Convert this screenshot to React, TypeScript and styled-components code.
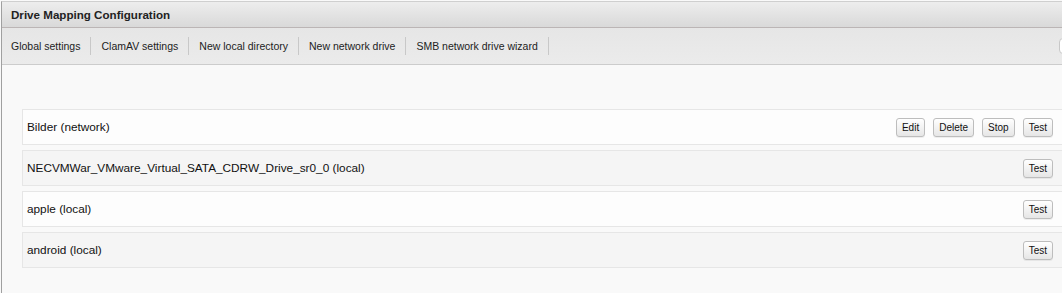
import styled, { createGlobalStyle } from "styled-components";

const GlobalStyle = createGlobalStyle`
  html, body {
    margin: 0;
    padding: 0;
    background: #f9f9f9;
    overflow: hidden;
    font-family: "Liberation Sans", Arial, sans-serif;
    color: #111;
  }
`;

type Drive = { name: string; kind: "network" | "local"; actions: string[] };

const drives: Drive[] = [
  { name: "Bilder", kind: "network", actions: ["Edit", "Delete", "Stop", "Test"] },
  { name: "NECVMWar_VMware_Virtual_SATA_CDRW_Drive_sr0_0", kind: "local", actions: ["Test"] },
  { name: "apple", kind: "local", actions: ["Test"] },
  { name: "android", kind: "local", actions: ["Test"] },
];

const menu = [
  "Global settings",
  "ClamAV settings",
  "New local directory",
  "New network drive",
  "SMB network drive wizard",
];

function App() {
  return (
    <>
      <GlobalStyle />
      <Panel>
        <TitleBar>Drive Mapping Configuration</TitleBar>
        <Toolbar>
          {menu.map((item) => (
            <MenuItem key={item}>{item}</MenuItem>
          ))}
          <Search />
        </Toolbar>
        <Content>
          {drives.map((d, idx) => (
            <DriveRow key={d.name} $odd={idx % 2 === 1}>
              <DriveName>
                {d.name} ({d.kind})
              </DriveName>
              <Actions>
                {d.actions.map((a) => (
                  <Button key={a}>{a}</Button>
                ))}
              </Actions>
            </DriveRow>
          ))}
        </Content>
      </Panel>
    </>
  );
}

export default App;

const Panel = styled.div`
  margin: 1px 0 0 1px;
  width: 1170px;
  height: 292px;
  border-left: 1px solid #a0a0a0;
  border-top: 1px solid #cfcfcf;
  background: #f9f9f9;
  box-sizing: border-box;
`;

const TitleBar = styled.div`
  height: 25px;
  line-height: 25px;
  padding-left: 9px;
  font-size: 11.6px;
  font-weight: bold;
  color: #222;
  background: linear-gradient(#ededed, #d9d9d9);
  border-bottom: 1px solid #bbb5b5;
`;

const Toolbar = styled.div`
  display: flex;
  align-items: center;
  height: 36px;
  padding-right: 10px;
  background: linear-gradient(#e6e6e6, #ebebeb);
  border-bottom: 1px solid #cccccc;
`;

const MenuItem = styled.span`
  padding: 0 10px 0 9px;
  font-size: 10.5px;
  line-height: 18px;
  color: #222;
  border-right: 1px solid #c8c8c8;
  & + & {
    padding-left: 10px;
  }
`;

const Search = styled.div`
  margin-left: auto;
  width: 100px;
  height: 14px;
  border: 1px solid #c8c8c8;
  border-radius: 4px;
  background: #fff;
`;

const Content = styled.div`
  display: flex;
  flex-direction: column;
  gap: 5px;
  padding: 44px 0 0 20px;
`;

const DriveRow = styled.div<{ $odd: boolean }>`
  display: flex;
  align-items: center;
  justify-content: space-between;
  width: 1042px;
  height: 36px;
  box-sizing: border-box;
  padding: 0 10px 0 4px;
  border: 1px solid #e6e6e6;
  background: ${(p) => (p.$odd ? "#f5f5f5" : "#fdfdfd")};
`;

const DriveName = styled.span`
  font-size: 11.8px;
  color: #111;
`;

const Actions = styled.div`
  display: flex;
  gap: 8px;
`;

const Button = styled.button`
  height: 19px;
  padding: 0 5px;
  font-family: "Liberation Sans", Arial, sans-serif;
  font-size: 10px;
  color: #111;
  border: 1px solid #bdbdbd;
  border-radius: 3px;
  background: linear-gradient(#ffffff, #e6e6e6);
  box-shadow: 0 1px 0 rgba(0, 0, 0, 0.06);
  cursor: pointer;
`;
